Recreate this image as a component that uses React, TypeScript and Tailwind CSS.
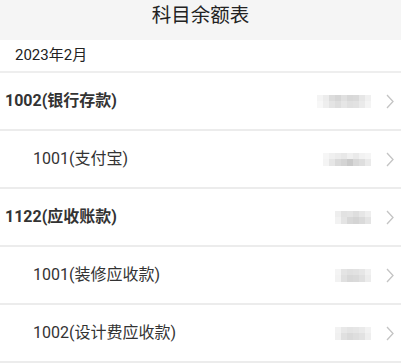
const rows = [
  {
    label: "1002(银行存款)",
    bold: true,
    mosaic: [
      ["#f4f4f4", "#ececec", "#dcdcdc", "#d6d6d6", "#e0e0e0", "#d8d8d8", "#dadada", "#e6e6e6", "#f0f0f0"],
      ["#f7f7f7", "#eeeeee", "#e4e4e4", "#dedede", "#e6e6e6", "#e0e0e0", "#e2e2e2", "#eaeaea", "#f4f4f4"],
    ],
  },
  {
    label: "1001(支付宝)",
    bold: false,
    mosaic: [
      ["#f6f6f6", "#f0f0f0", "#ececec", "#e8e8e8", "#f0f0f0", "#eaeaea", "#f2f2f2", "#f5f5f5"],
      ["#f4f4f4", "#e6e6e6", "#dadada", "#d4d4d4", "#cacaca", "#d8d8d8", "#dedede", "#eaeaea"],
    ],
  },
  {
    label: "1122(应收账款)",
    bold: true,
    mosaic: [
      ["#eeeeee", "#e2e2e2", "#e4e4e4", "#dedede", "#e6e6e6", "#eeeeee"],
      ["#f2f2f2", "#e4e4e4", "#d8d8d8", "#d4d4d4", "#dadada", "#e4e4e4"],
    ],
  },
  {
    label: "1001(装修应收款)",
    bold: false,
    mosaic: [
      ["#f4f4f4", "#e4e4e4", "#e0e0e0", "#e2e2e2", "#e6e6e6", "#f0f0f0"],
      ["#f2f2f2", "#e0e0e0", "#d8d8d8", "#dadada", "#e0e0e0", "#ececec"],
    ],
  },
  {
    label: "1002(设计费应收款)",
    bold: false,
    mosaic: [
      ["#f2f2f2", "#e8e8e8", "#e4e4e4", "#e6e6e6", "#eaeaea", "#f2f2f2"],
      ["#f0f0f0", "#e0e0e0", "#dadada", "#dedede", "#e2e2e2", "#eeeeee"],
    ],
  },
];

function Mosaic({ cells }: { cells: string[][] }) {
  return (
    <div className="flex flex-col">
      {cells.map((line, r) => (
        <div key={r} className="flex">
          {line.map((c, i) => (
            <span key={i} className="block w-[6px] h-[6.5px]" style={{ background: c }} />
          ))}
        </div>
      ))}
    </div>
  );
}

function Chevron() {
  return (
    <svg width="8" height="15" viewBox="0 0 8 15" fill="none">
      <polyline points="1,1 7,7.5 1,14" stroke="#c4c4c4" strokeWidth="1.3" />
    </svg>
  );
}

export default function App() {
  return (
    <div
      className="w-[401px] h-[363px] overflow-hidden bg-white text-[#333]"
      style={{ fontFamily: "Roboto, 'Noto Sans CJK SC', sans-serif" }}
    >
      <header className="h-[40px] bg-[#f5f5f5] flex items-center justify-center">
        <h1 className="text-[19.5px] text-[#222] leading-none -mt-[8px]">科目余额表</h1>
      </header>
      <div className="h-[33px] flex items-center px-[15px] border-b-2 border-[#eeeeee] text-[15px] text-[#222]">
        2023年2月
      </div>
      <ul>
        {rows.map((row, i) => (
          <li
            key={i}
            className={
              "h-[58px] flex items-center border-b-2 border-[#ececec] " +
              (row.bold ? "pl-[5px]" : "pl-[33px]")
            }
          >
            <span className={"flex-1 text-[16px] " + (row.bold ? "font-bold" : "")}>{row.label}</span>
            <Mosaic cells={row.mosaic} />
            <span className="ml-[15px] mr-[7px] flex items-center">
              <Chevron />
            </span>
          </li>
        ))}
      </ul>
    </div>
  );
}
